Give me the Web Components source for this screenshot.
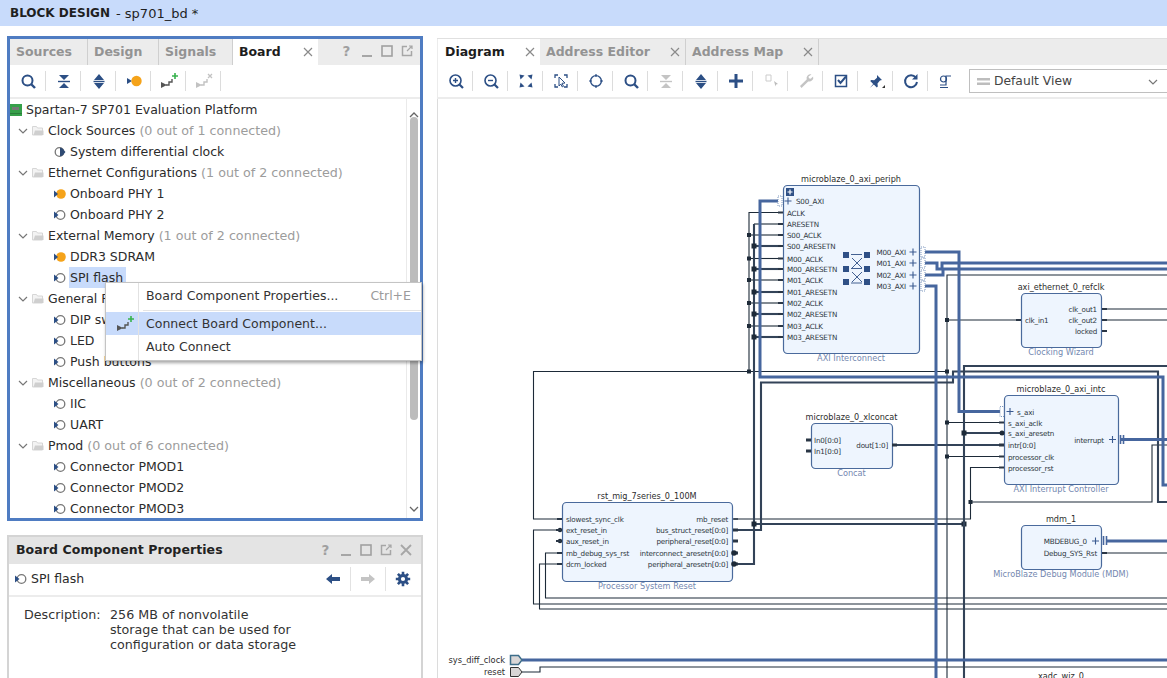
<!DOCTYPE html>
<html><head><meta charset="utf-8">
<style>
html,body{margin:0;padding:0;width:1167px;height:678px;overflow:hidden;background:#fff;font-family:"DejaVu Sans",sans-serif;color:#2a2a2a}
app-shell{height:678px}
</style></head><body>
<app-shell></app-shell>
<script>
const B='#2c4f85';
const ICONS={
search:`<circle cx="7.5" cy="7.5" r="5" fill="none" stroke="${B}" stroke-width="2"/><path d="M11 11l4 4" stroke="${B}" stroke-width="2.4"/>`,
zoomin:`<circle cx="7.5" cy="7.5" r="5.5" fill="none" stroke="${B}" stroke-width="1.6"/><path d="M11.5 11.5l3.5 3.5" stroke="${B}" stroke-width="2.2"/><path d="M5 7.5h5M7.5 5v5" stroke="${B}" stroke-width="1.4"/>`,
zoomout:`<circle cx="7.5" cy="7.5" r="5.5" fill="none" stroke="${B}" stroke-width="1.6"/><path d="M11.5 11.5l3.5 3.5" stroke="${B}" stroke-width="2.2"/><path d="M5 7.5h5" stroke="${B}" stroke-width="1.4"/>`,
fit:`<path d="M1.500 1.500l5 1-4 4zM14.500 1.500l-5 1 4 4zM1.500 14.500l5-1-4-4zM14.500 14.500l-5-1 4-4z" fill="${B}"/>`,
fitsel:`<path d="M2 5V2h3M11 2h3v3M2 11v3h3M14 11v3h-3" fill="none" stroke="${B}" stroke-width="1.3"/><path d="M6 4l6 6-3 .3 1.5 3-1.3.6L7.8 11 6 13z" fill="#fff" stroke="${B}" stroke-width="1"/>`,
target:`<circle cx="8" cy="8" r="5.4" fill="none" stroke="${B}" stroke-width="1.4"/><path d="M8 1v3M8 12v3M1 8h3M12 8h3" stroke="${B}" stroke-width="1.2"/>`,
collapse:`<path d="M3 2h10L8 7zM3 15h10L8 10z" fill="${B}"/><path d="M2 8.5h12" stroke="${B}" stroke-width="1.4"/>`,
collapseg:`<path d="M3 2h10L8 7zM3 15h10L8 10z" fill="#c4c4c4"/><path d="M2 8.5h12" stroke="#c4c4c4" stroke-width="1.4"/>`,
expand:`<path d="M8 1l5 6H3zM8 16l5-6H3z" fill="${B}"/><path d="M2.5 8.5h11" stroke="${B}" stroke-width="1.4"/>`,
pin:`<path d="M1 5l5 3-5 3z" fill="${B}"/><circle cx="10.5" cy="8" r="5.2" fill="#f5a31a"/>`,
connect:`<path d="M1 10l6 3-6 3z" fill="#555"/><path d="M6 13h3v-3h3V7" fill="none" stroke="#555" stroke-width="1.4"/><path d="M12 4h6M15 1v6" stroke="#37b24d" stroke-width="1.6"/>`,
disconnect:`<path d="M1 10l6 3-6 3z" fill="#c2c2c2"/><path d="M6 13h3v-3h3V7" fill="none" stroke="#c2c2c2" stroke-width="1.4"/><path d="M13 2l4 4M17 2l-4 4" stroke="#c2c2c2" stroke-width="1.3"/>`,
plus:`<path d="M8 1v14M1 8h14" stroke="${B}" stroke-width="3"/>`,
addport:`<path d="M3 2h5v6H3z" fill="#fff" stroke="#ccc"/><path d="M11 8l4 3-2 .5-.5 2z" fill="#bbb"/>`,
wrench:`<path d="M13.5 1.5a4 4 0 0 0-4.8 5L2 13l1.5 2 6.700-6.600a4 4 0 0 0 4.900-5l-2.400 2.300-1.800-.5-.4-1.700z" fill="#c4c4c4"/>`,
check:`<path d="M2.500 2.500h11v11h-11z" fill="none" stroke="${B}" stroke-width="1.500"/><path d="M5 7l2.500 3L13 3.500" fill="none" stroke="${B}" stroke-width="2"/>`,
pushpin:`<path d="M9 2l5 5-2 .6-2.500 2.800.3 3-1 1-3-3-4 3.500 3.400-4-3-3 1-1 3 .3 2.800-2.500z" fill="${B}"/><path d="M14 15h3v-3z" fill="#333"/>`,
refresh:`<path d="M12.800 4.500A6 6 0 1 0 14 9" fill="none" stroke="${B}" stroke-width="2"/><path d="M14.500 1v5.500H9z" fill="${B}"/>`,
regen:`<circle cx="5.500" cy="6" r="3" fill="none" stroke="${B}" stroke-width="1.200"/><path d="M2 12h6v-9h5M2 14.500h8" fill="none" stroke="${B}" stroke-width="1.200"/>`,
left:`<path d="M1 7l6-5v3h8v4H7v3z" fill="${B}"/>`,
right:`<path d="M15 7L9 2v3H1v4h8v3z" fill="#c4c4c4"/>`,
gear:`<circle cx="8" cy="8" r="3.600" fill="none" stroke="${B}" stroke-width="3"/><path d="M8 .8v3M8 12.200v3M.8 8h3M12.200 8h3M2.900 2.900l2.100 2.100M11 11l2.100 2.100M13.100 2.900L11 5M5 11l-2.100 2.100" stroke="${B}" stroke-width="2.600"/>`,
chev:`<path d="M2 5l4 4 4-4" fill="none" stroke="#777" stroke-width="1.200"/>`,
folder:`<path d="M.5 2.500h4l1 1.500h5v7H.5z" fill="#f3f3f3" stroke="#d6d6d6"/><path d="M3 6.500h8.500V11H1.500z" fill="#cfcfcf"/>`,
board:`<rect width="12" height="12" fill="#36a04a"/><rect x="2" y="3" width="7" height="3" fill="#777"/><rect y="9" width="12" height="1" fill="#2a7d3a"/>`,
ifnone:`<circle cx="6.500" cy="6" r="4.300" fill="#fff" stroke="#777" stroke-width="1.300"/><path d="M0 2.500l4.500 3.500-4.500 3.500z" fill="${B}"/>`,
ifon:`<circle cx="7" cy="6" r="4.800" fill="#f5a31a"/><path d="M0 2.500l4 3.500-4 3.500z" fill="${B}"/>`,
ifclock:`<circle cx="5.500" cy="6" r="4.300" fill="#fff" stroke="#777" stroke-width="1.300"/><path d="M6 1.700a4.300 4.300 0 0 1 0 8.600z" fill="#2f4a73"/><path d="M8.500 3l3 3-3 3z" fill="#2f4a73"/>`,
view:`<path d="M1 4h13v2.500H1zM1 8.500h13V11H1z" fill="#bdbdbd"/>`
};
function icon(n,w=16,h=16,vb){return `<svg width="${w}" height="${h}" viewBox="${vb||`0 0 ${w} ${h}`}" style="display:block;overflow:visible">${ICONS[n]}</svg>`}
function def(name,css,html,init){
  customElements.define(name,class extends HTMLElement{
    constructor(){super();const r=this.attachShadow({mode:'open'});r.innerHTML=`<style>${css}</style>${typeof html==='function'?html(this):html}`;}
    connectedCallback(){if(init&&!this._i){this._i=1;init(this)}}
  });
}

def('tool-btn',`:host{display:flex;flex:none;width:35px;height:32px;align-items:center;justify-content:center;box-sizing:border-box;position:relative}
:host([sep])::after{content:"";position:absolute;right:0;top:6px;bottom:6px;width:1px;background:#dcdcdc}`,
`<span id="i"></span>`,el=>{const w=+(el.getAttribute('w')||16);el.shadowRoot.getElementById('i').innerHTML=icon(el.getAttribute('name'),w,w,`0 0 ${w} ${w}`)});

def('dock-tab',`:host{display:flex;align-items:center;box-sizing:border-box;height:100%;font:bold 12.500px "DejaVu Sans",sans-serif;color:#939393;background:#ececec;padding-left:6px;padding-bottom:2px;border-right:1px solid #cfcfcf}
:host([active]){background:#fff;color:#1d1d1d;border-right:none}
.x{margin-left:auto;margin-right:4px;width:12px;height:12px;padding-top:2px}
svg{display:block}`,
`<slot></slot><span class="x" id="x" hidden><svg width="12" height="12"><path d="M2 2l8 8M10 2l-8 8" stroke="#8a8a8a" stroke-width="1.200"/></svg></span>`,
el=>{if(el.hasAttribute('closable'))el.shadowRoot.getElementById('x').hidden=false;});

def('win-btns',`:host{display:flex;align-items:center;gap:6px;color:#a9a9a9}
svg{display:block}`,
`<svg width="14" height="14"><text x="2.500" y="12" font-family="DejaVu Sans" font-weight="bold" font-size="13.500" fill="#a0a0a0">?</text></svg>
<svg width="14" height="14"><path d="M2 12h10" stroke="#a6a6a6" stroke-width="2"/></svg>
<svg width="14" height="14"><rect x="2" y="2" width="10" height="10" fill="none" stroke="#a0a0a0" stroke-width="1.600"/></svg>
<svg width="14" height="14"><path d="M7 2.500H2.500v9h9V7" fill="none" stroke="#a6a6a6" stroke-width="1.500"/><path d="M7 7l5-5M9 2h3v3" fill="none" stroke="#a6a6a6" stroke-width="1.200"/></svg>
<slot></slot>`);

def('tree-row',`:host{display:flex;align-items:center;height:21px;font-size:12.500px;white-space:nowrap;color:#2b2b2b}
.ind{display:flex;align-items:center;flex:none}
.t{padding:0 1px;line-height:21px}
:host([selected]) .t{background:#c8dbfb;padding-right:3px}
.g{color:#9c9c9c;font-size:12.700px}
.c{width:12px;flex:none;margin-right:3px}
.f{margin-right:3px}
svg{display:block}`,
el=>{const lvl=+el.getAttribute('level'),ic=el.getAttribute('icon');
 if(lvl===0)return `<span class="ind" style="margin-right:3px">${icon('board',12,12)}</span><span class="t"><slot></slot></span>`;
 if(lvl===1)return `<span class="ind" style="margin-left:7px"><span class="c">${icon('chev',12,14)}</span><span class="f">${icon('folder',12,14)}</span></span><span class="t"><slot></slot> <span class="g">${el.getAttribute('note')}</span></span>`;
 return `<span class="ind" style="margin-left:44px;width:15px">${icon(ic,12,12)}</span><span class="t"><slot></slot></span>`;
});

def('board-tree',`:host{display:block;position:relative;flex:1;min-height:0;overflow:hidden}
.list{position:absolute;inset:0 14px 0 0;overflow:hidden}
.sb{position:absolute;right:0;top:0;bottom:0;width:14px;background:#fff;border-left:1px solid #eaeaea;box-sizing:border-box}
.th{position:absolute;left:3px;width:8px;top:18px;height:303px;background:#bcbcbc;border-radius:4px}
.u,.d{position:absolute;left:2px}.u{top:4px}.d{bottom:2px}`,
`<div class="list"><slot></slot></div><div class="sb"><div class="u"><svg width="10" height="6"><path d="M1 5l4-4 4 4" fill="none" stroke="#666" stroke-width="1.300"/></svg></div><div class="th"></div><div class="d"><svg width="10" height="6"><path d="M1 1l4 4 4-4" fill="none" stroke="#666" stroke-width="1.300"/></svg></div></div>`);

def('ctx-menu',`:host{position:absolute;left:95px;top:243px;width:317px;height:79px;background:#fff;border:1px solid #c4c4c4;box-sizing:border-box;box-shadow:1px 2px 3px rgba(0,0,0,.35);font-size:12.500px;color:#333;z-index:5}
.g{position:absolute;left:32px;top:0;bottom:0;width:1px;background:#e2e2e2}
.r{display:flex;align-items:center;padding-left:40px;padding-right:10px;box-sizing:border-box;position:relative}
.a{height:27px;padding-bottom:2px}.b{height:23px;background:#c8dbfb;margin-top:2px}.c{height:25px;padding-bottom:2px}
.s{margin-left:auto;color:#9b9b9b}
.sep{position:absolute;left:37px;right:0;top:27px;height:1px;background:#e4e4e4}
.ic{position:absolute;left:10px;top:3px}`,
`<div class="r a">Board Component Properties...<span class="s">Ctrl+E</span></div><div class="sep"></div>
<div class="r b"><span class="ic">${icon('connect',18,18)}</span>Connect Board Component...</div>
<div class="r c">Auto Connect</div><div class="g"></div>`);

const W=(d,c,s)=>`<path d="${d}" fill="none" stroke="${c}" stroke-width="${s}"/>`;
const BLUE='#46669e',DK='#1d2a38',DK2='#334358';
const wires=()=>{let o='';
 const thin=d=>o+=W(d,DK,1.1),thick=d=>o+=W(d,DK2,2.1),blue=d=>o+=W(d,BLUE,3);
 const jn=(x,y,s=2.5)=>o+=`<rect x="${x-s}" y="${y-s}" width="${s*2}" height="${s*2}" fill="#1d2a38"/>`;
 thin('M781 212.500H749V371');
 [235,258.5,280,303,326].forEach(y=>{thin(`M781 ${y}H749`);jn(749,y,2)});
 thin('M560 519H533.500V371.500H947');jn(749,371.500,2);
 thin('M1167 275H947V678');
 thin('M947 320H1020');jn(947,320,2);jn(947,371.500,2);
 thin('M947 422.500H1002');jn(947,422.500,2);
 thin('M947 456.500H1002');jn(947,456.500,2);
 thin('M1002 467.500H970.500V502H1152V445H1167');
 thin('M734 519H970.500V502');jn(970.500,502,2);
 thin('M1102 309H1167M1102 320H1167');
 thin('M1104 553H1167');
 thin('M560 530H533.500V604H1167');
 thin('M560 553H545.500V598H1167');
 thin('M560 564H539.500V609H1167');
 thin('M522 672H540V667H1167');
 thin('M781 224H754');
 thick('M734 564H754V224');
 [246,269,292,314,337].forEach(y=>{thick(`M781 ${y}H754`);jn(754,y,2.500)});
 thick('M734 530H761V382.500H953V371.500H1158V502H1167');
 thick('M754 524H964');jn(754,524,2.500);jn(964,524,2.500);
 thick('M1167 366H964V678');
 thick('M964 433H1002');jn(964,433,2.500);
 thick('M893 445H1002');
 blue('M779 201H760V377H1163V485H1167');
 blue('M925 252H959V411.500H1000');
 blue('M925 263H937V269H942V263H1167');
 blue('M925 275H943V269H1167');
 blue('M925 286H936V678');
 blue('M1120 439.500H1167');
 blue('M1106 541H1167');
 blue('M522 660H1167');
 return o};
function txt(x,y,s,a='start',c='#2d3540',sz=7.200,ex='letter-spacing="-.2"'){return `<text x="${x}" y="${y}" font-family="DejaVu Sans" font-size="${sz}" fill="${c}" text-anchor="${a}" ${ex}>${s}</text>`}
function stub(x,y,th=2){return `<rect x="${x}" y="${y-th/2}" width="5" height="${th}" fill="#2a3645"/>`}
function blk(x,y,w,h,title,sub,subx){const cx=x+w/2;
 return `<rect x="${x}.5" y="${y}.5" width="${w}" height="${h}" rx="4" fill="#eef5fe" stroke="#4a6a9c" stroke-width="1.200"/>`
 +txt(cx,y-3.500,title,'middle','#2c2c2c',8.150,'')+txt(subx||cx,y+h+7.500,sub,'middle','#7488b0',8.200,'')}
function ifport(x,y,right){
 const dx=right?x+8:x-10;
 return `<rect x="${dx}" y="${y-5}" width="4" height="10" fill="#fff" stroke="#6f8db8" stroke-width=".9" stroke-dasharray="1 1"/>`+
 `<path d="M${x-3.500} ${y}h7M${x} ${y-3.500}v7" stroke="#3a5a90" stroke-width="1.100"/>`}
const blocks=()=>{let o='';
 o+=blk(783,185,136,168,'microblaze_0_axi_periph','AXI Interconnect');
 o+=`<rect x="786" y="188" width="8" height="8" fill="#2f5086"/><path d="M787.500 192h5M790 189.500v5" stroke="#fff" stroke-width="1.200"/>`;
 o+=ifport(788,201,false)+txt(796,204,'S00_AXI');
 [['ACLK',212.5],['ARESETN',224],['S00_ACLK',235],['S00_ARESETN',246],['M00_ACLK',258.5],['M00_ARESETN',269],['M01_ACLK',280],['M01_ARESETN',292],['M02_ACLK',303],['M02_ARESETN',314],['M03_ACLK',326],['M03_ARESETN',337]].forEach(([s,y])=>{o+=stub(778,y)+txt(787,y+3,s)});
 [['M00_AXI',252],['M01_AXI',263],['M02_AXI',275],['M03_AXI',286]].forEach(([s,y])=>{o+=txt(906,y+3,s,'end')+ifport(913,y,true)});
 o+=`<g fill="#2f5086"><rect x="843" y="252" width="6" height="6"/><rect x="864" y="252" width="6" height="6"/><rect x="843" y="266" width="6" height="6"/><rect x="864" y="266" width="6" height="6"/><rect x="843" y="279" width="6" height="6"/><rect x="864" y="279" width="6" height="6"/></g><path d="M851 254.500h11M852 258l10 10M862 258l-10 10M851 268.500h11M852 272l10 10M862 272l-10 10M851 283h11" stroke="#2f5086" stroke-width=".9" fill="none"/>`;
 o+=blk(1021,293,80,54,'axi_ethernet_0_refclk','Clocking Wizard');
 o+=stub(1016,320)+txt(1025,323,'clk_in1');
 [['clk_out1',309],['clk_out2',320],['locked',331]].forEach(([s,y])=>{o+=txt(1097,y+2.500,s,'end')+stub(1102,y)});
 o+=blk(811,423,81,45,'microblaze_0_xlconcat','Concat');
 o+=stub(806,440,3)+txt(814,443,'In0[0:0]')+stub(806,451,3)+txt(814,454,'In1[0:0]')+txt(888,448,'dout[1:0]','end')+stub(892,445,3);
 o+=blk(1004,395,114,89,'microblaze_0_axi_intc','AXI Interrupt Controller');
 o+=ifport(1010,411.500,false)+txt(1017,414.500,'s_axi');
 [['s_axi_aclk',422.5],['processor_clk',456.5],['processor_rst',467.5]].forEach(([s,y])=>{o+=stub(999,y)+txt(1008,y+3,s)});
 o+=`<circle cx="1002" cy="433" r="2.500" fill="#1d2a38"/>`+txt(1008,436,'s_axi_aresetn')+stub(999,445,3)+txt(1008,448,'intr[0:0]');
 o+=txt(1104,442.500,'interrupt','end')+`<path d="M1109 439.500h7M1112.500 436v7" stroke="#3a5a90" stroke-width="1.100"/><path d="M1120.500 435v9M1123.500 435v9" stroke="#46669e" stroke-width="1.600"/>`;
 o+=blk(1021,525,80,44,'mdm_1','MicroBlaze Debug Module (MDM)');
 o+=txt(1087,544,'MBDEBUG_0','end')+`<path d="M1092 541h7M1095.500 537.500v7" stroke="#3a5a90" stroke-width="1.100"/><path d="M1103.500 536v9M1106.500 536v9" stroke="#46669e" stroke-width="1.600"/>`;
 o+=txt(1097,556,'Debug_SYS_Rst','end')+stub(1102,553);
 o+=blk(562,502,170,79,'rst_mig_7series_0_100M','Processor System Reset');
 [['slowest_sync_clk',519],['mb_debug_sys_rst',553],['dcm_locked',564]].forEach(([s,y])=>{o+=stub(557,y)+txt(566,y+3,s)});
 [['ext_reset_in',530],['aux_reset_in',541]].forEach(([s,y])=>{o+=`<circle cx="560" cy="${y}" r="2.200" fill="#1d2a38"/>`+stub(556,y)+txt(566,y+3,s)});
 [['mb_reset',519,0],['bus_struct_reset[0:0]',530,0],['peripheral_reset[0:0]',541,0],['interconnect_aresetn[0:0]',553,1],['peripheral_aresetn[0:0]',564,1]].forEach(([s,y,c])=>{o+=txt(728,y+3,s,'end')+stub(733,y,y==519?1.500:3);if(c)o+=`<circle cx="734" cy="${y}" r="2.800" fill="#1d2a38"/>`});
 o+=txt(505,663,'sys_diff_clock','end','#2d2d2d',8.300,'')+txt(505,675,'reset','end','#2d2d2d',8.300,'');
 o+=`<path d="M510.500 655.500h8l3.500 4.500-3.500 4.500h-8z" fill="#d9d6d6" stroke="#3e6e8a" stroke-width="1.500"/><path d="M510.500 667.500h8l3.500 4.500-3.500 4.500h-8z" fill="#d9d6d6" stroke="#333" stroke-width="1"/>`;
 o+=txt(1061,679,'xadc_wiz_0','middle','#2c2c2c',8.150,'');
 return o};

def('diagram-canvas',`:host{display:block;flex:1;min-height:0;position:relative;overflow:hidden;background:#fff;border-left:1px solid #dcdcdc}
svg{display:block;position:absolute;left:0;top:0}`,
`<svg width="729" height="579" viewBox="438 99 729 579">${wires()}${blocks()}</svg>`);

def('title-bar',`:host{display:flex;align-items:center;height:26px;background:#c8dbfb;padding-left:10px;font-size:13px;color:#1f1f1f;flex:none}
b{font-weight:bold;font-size:12px;margin-right:6px}`,`<b><slot name="h"></slot></b><slot></slot>`);

def('board-panel',`:host{display:flex;flex-direction:column;height:485px;border:3px solid #4f7cc2;box-sizing:border-box;position:relative;background:#fff;flex:none}
.tabs{display:grid;grid-template-columns:78px 71px 74px 85px 1fr;height:26px;background:#ececec;flex:none}
.wb{display:flex;justify-content:flex-end;align-items:center;padding-right:6px;padding-bottom:2px}
.tb{display:flex;height:32px;flex:none;border-bottom:2px solid #ececec;box-sizing:content-box}
.tb tool-btn:first-child{width:36px}`,
`<div class="tabs"><dock-tab>Sources</dock-tab><dock-tab>Design</dock-tab><dock-tab>Signals</dock-tab><dock-tab active closable>Board</dock-tab><div class="wb"><win-btns></win-btns></div></div>
<div class="tb"><tool-btn sep name="search"></tool-btn><tool-btn sep name="collapse"></tool-btn><tool-btn sep name="expand"></tool-btn><tool-btn sep name="pin"></tool-btn><tool-btn sep name="connect" w="18"></tool-btn><tool-btn sep name="disconnect" w="18"></tool-btn></div>
<slot></slot><slot name="menu"></slot>`);

def('prop-panel',`:host{display:flex;flex-direction:column;flex:1;min-height:0;border:2px solid #d4d4d4;border-bottom:none;box-sizing:border-box;margin-top:14px;background:#fff}
.h{display:flex;align-items:center;height:27px;background:#e4e4e4;padding:0 8px 2px 7px;box-sizing:border-box;font:bold 12.500px "DejaVu Sans",sans-serif;color:#222;flex:none;letter-spacing:.08px}
.h win-btns{margin-left:auto}
.x{margin-left:0;display:block}
.r{display:flex;align-items:center;height:33px;border-bottom:2px solid #ececec;padding:0 0 2px 6px;box-sizing:border-box;font-size:12.500px;flex:none}
.r .n{margin-left:4px}
.r .sp{margin-left:auto;display:flex;align-items:center;margin-right:1px}
.c{width:35px;height:24px;display:flex;align-items:center;justify-content:center;box-sizing:border-box}
.c+.c{border-left:1px solid #e2e2e2}
.d{display:flex;padding:10px 0 0 15px;font-size:12.700px;line-height:15px;color:#333}
.l{width:86px;flex:none;line-height:18px;margin-top:-1px}`,
`<div class="h"><span>Board Component Properties</span><win-btns><svg class="x" width="14" height="14"><path d="M2 2l10 10M12 2L2 12" stroke="#a6a6a6" stroke-width="1.800"/></svg></win-btns></div>
<div class="r">${icon('ifnone',12,12)}<span class="n">SPI flash</span><span class="sp"><span class="c">${icon('left',16,14)}</span><span class="c">${icon('right',16,14)}</span><span class="c">${icon('gear',16,16)}</span></span></div>
<div class="d"><span class="l">Description:</span><span>256 MB of nonvolatile<br>storage that can be used for<br>configuration or data storage</span></div>`);

def('diagram-panel',`:host{display:flex;flex-direction:column;flex:1;min-width:0;height:100%;box-sizing:border-box;padding-top:12px;overflow:hidden}
.tabs{display:flex;height:27px;background:#ececec;flex:none;border-top:1px solid #e0e0e0;box-sizing:border-box;padding-left:1px}
.tabs dock-tab:nth-child(1){width:102px;padding-left:7px}
.tabs dock-tab:nth-child(2){width:146px;padding-left:6px}
.tabs dock-tab:nth-child(3){width:133px;padding-left:6px}
.tb{display:flex;align-items:center;height:32px;flex:none;border-bottom:2px solid #ececec;border-left:1px solid #ececec}
.dd{margin-left:6px;width:220px;height:24px;border:1px solid #bfbfbf;box-sizing:border-box;display:flex;align-items:center;font-size:12.300px;color:#444;padding-left:6px;gap:3px;flex:none;position:relative}
.dd svg{display:block}
.ch{position:absolute;left:177px;top:5px}`,
`<div class="tabs"><dock-tab active closable>Diagram</dock-tab><dock-tab closable>Address Editor</dock-tab><dock-tab closable>Address Map</dock-tab></div>
<div class="tb"><tool-btn sep name="zoomin"></tool-btn><tool-btn sep name="zoomout"></tool-btn><tool-btn sep name="fit"></tool-btn><tool-btn sep name="fitsel"></tool-btn><tool-btn sep name="target"></tool-btn><tool-btn sep name="search"></tool-btn><tool-btn sep name="collapseg"></tool-btn><tool-btn sep name="expand"></tool-btn><tool-btn sep name="plus"></tool-btn><tool-btn sep name="addport"></tool-btn><tool-btn sep name="wrench"></tool-btn><tool-btn sep name="check"></tool-btn><tool-btn sep name="pushpin"></tool-btn><tool-btn sep name="refresh"></tool-btn><tool-btn name="regen"></tool-btn>
<div class="dd">${icon('view',15,15)}<span>Default View</span><span class="ch">${icon('chev',12,14)}</span></div></div>
<diagram-canvas></diagram-canvas>`);

def('app-shell',`:host{display:flex;flex-direction:column;width:1167px;height:678px;overflow:hidden}
.m{display:flex;flex:1;min-height:0;gap:14px;padding-left:7px}
.l{width:416px;flex:none;display:flex;flex-direction:column;padding-top:10px;box-sizing:border-box}`,
`<title-bar><span slot="h">BLOCK DESIGN</span>- sp701_bd *</title-bar>
<div class="m"><div class="l">
<board-panel>
<board-tree>
<tree-row level="0">Spartan-7 SP701 Evaluation Platform</tree-row>
<tree-row level="1" note="(0 out of 1 connected)">Clock Sources</tree-row>
<tree-row level="2" icon="ifclock">System differential clock</tree-row>
<tree-row level="1" note="(1 out of 2 connected)">Ethernet Configurations</tree-row>
<tree-row level="2" icon="ifon">Onboard PHY 1</tree-row>
<tree-row level="2" icon="ifnone">Onboard PHY 2</tree-row>
<tree-row level="1" note="(1 out of 2 connected)">External Memory</tree-row>
<tree-row level="2" icon="ifon">DDR3 SDRAM</tree-row>
<tree-row level="2" icon="ifnone" selected>SPI flash</tree-row>
<tree-row level="1" note="(0 out of 4 connected)">General Purpose Input or Output</tree-row>
<tree-row level="2" icon="ifnone">DIP switches</tree-row>
<tree-row level="2" icon="ifnone">LED</tree-row>
<tree-row level="2" icon="ifnone">Push buttons</tree-row>
<tree-row level="1" note="(0 out of 2 connected)">Miscellaneous</tree-row>
<tree-row level="2" icon="ifnone">IIC</tree-row>
<tree-row level="2" icon="ifnone">UART</tree-row>
<tree-row level="1" note="(0 out of 6 connected)">Pmod</tree-row>
<tree-row level="2" icon="ifnone">Connector PMOD1</tree-row>
<tree-row level="2" icon="ifnone">Connector PMOD2</tree-row>
<tree-row level="2" icon="ifnone">Connector PMOD3</tree-row>
</board-tree>
<ctx-menu slot="menu"></ctx-menu>
</board-panel>
<prop-panel></prop-panel>
</div><diagram-panel></diagram-panel></div>`);
</script>
</body></html>
